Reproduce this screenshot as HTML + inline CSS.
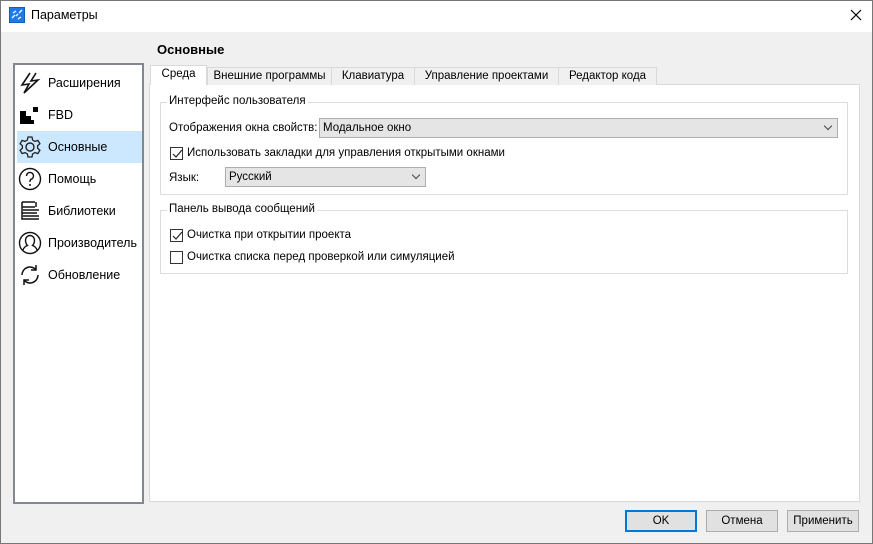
<!DOCTYPE html>
<html><head><meta charset="utf-8"><style>
*{box-sizing:border-box;margin:0;padding:0}
body{width:873px;height:544px;overflow:hidden;font-family:"Liberation Sans",sans-serif;font-size:12px;color:#000;background:#f0f0f0;position:relative}
.frame{position:absolute;left:0;top:0;width:873px;height:544px;border:1px solid #777;pointer-events:none}
.title{position:absolute;left:0;top:0;width:873px;height:32px;background:#fff}
.a{position:absolute}
.lp{left:13px;top:63px;width:131px;height:441px;background:#fff;border:2px solid #828790}
.item{position:absolute;left:2px;width:125px;height:32px;line-height:32px;padding-left:31px;font-size:12.5px}
.item svg{position:absolute;left:1px;top:4px}
.cp{left:149px;top:84px;width:711px;height:418px;background:#fff;border:1px solid #d9d9d9}
.tab{position:absolute;top:67px;height:18px;background:#f0f0f0;border:1px solid #d9d9d9;border-bottom:none;text-align:center;line-height:16px;font-size:11.5px}
.gb{position:absolute;border:1px solid #dcdcdc}
.gl{position:absolute;top:-8px;left:6px;background:#fff;padding:0 2px;font-size:11.5px}
.cb{position:absolute;width:13px;height:13px;border:1px solid #333;background:#fff}
.combo{position:absolute;height:20px;background:#e5e5e5;border:1px solid #adadad;line-height:18px;padding-left:3px;font-size:11.5px}
.combo:after{content:"";position:absolute;right:6px;top:4px;width:5px;height:5px;border-right:1px solid #444;border-bottom:1px solid #444;transform:rotate(45deg)}
.btn{position:absolute;top:510px;width:72px;height:22px;background:#e1e1e1;border:1px solid #adadad;text-align:center;line-height:20px;font-size:11.5px}
</style></head><body>
<div class="title">
<svg class="a" style="left:9px;top:7px" width="16" height="16"><rect x="0.5" y="0.5" width="15" height="15" fill="#1e7be6" stroke="#0d5fc0"/><path d="M3 11 L6 8 M7 9 L9 7 M10 6 L13 3 M4 6 L7 4 M9 12 L12 10" stroke="#fff" stroke-width="1.3"/></svg>
<div class="a" style="left:31px;top:8px;font-size:12.5px">Параметры</div>
<svg class="a" style="left:850px;top:9px" width="12" height="12"><path d="M1 1L11 11M11 1L1 11" stroke="#000" stroke-width="1.2"/></svg>
</div>
<div class="a" style="left:157px;top:42px;font-weight:bold;font-size:13px">Основные</div>
<div class="a lp">
<div class="item" style="top:2px"><svg width="24" height="24"><path d="M12 2 L4 14 L11 13 L6 22 L20 9 L13 10 L18 2" fill="none" stroke="#111" stroke-width="1.6"/></svg>Расширения</div>
<div class="item" style="top:34px"><svg width="24" height="24"><path d="M2 21 L2 8 L8 8 L8 13 L13 13 L13 17 L16 17 L16 21Z" fill="#000"/><rect x="15" y="4" width="5" height="5" fill="#000"/></svg>FBD</div>
<div class="item" style="top:66px;background:#cce8ff"><svg width="24" height="24"><circle cx="12" cy="12" r="4" fill="none" stroke="#222" stroke-width="1.4"/><path d="M10 2h4l.6 3 2.4 1.4 2.9-1 2 3.4-2.3 2 0 2.4 2.3 2-2 3.4-2.9-1-2.4 1.4-.6 3h-4l-.6-3-2.4-1.4-2.9 1-2-3.4 2.3-2 0-2.4-2.3-2 2-3.4 2.9 1 2.4-1.4z" fill="none" stroke="#222" stroke-width="1.3"/></svg>Основные</div>
<div class="item" style="top:98px"><svg width="24" height="24"><circle cx="12" cy="12" r="10.5" fill="none" stroke="#111" stroke-width="1.4"/><path d="M8.5 9a3.5 3.5 0 1 1 4.5 3.3c-1 .4-1 1.2-1 2.7" fill="none" stroke="#111" stroke-width="1.4"/><circle cx="12" cy="18" r="1" fill="#111"/></svg>Помощь</div>
<div class="item" style="top:130px"><svg width="24" height="24"><path d="M4 3h13M4 3v5h13M4 8v6h15M4 14v6h17M4 20h17M5 11h16M5 17h16M18 3v5" fill="none" stroke="#111" stroke-width="1.5"/></svg>Библиотеки</div>
<div class="item" style="top:162px"><svg width="24" height="24"><circle cx="12" cy="12" r="10.5" fill="none" stroke="#111" stroke-width="1.4"/><path d="M5 19c1-3 3-4 4.5-4.5C8 13 7.5 11 7.5 9a4.5 4.5 0 0 1 9 0c0 2-.5 4-2 5.5 1.5.5 3.5 1.5 4.5 4.5" fill="none" stroke="#111" stroke-width="1.4"/></svg>Производитель</div>
<div class="item" style="top:194px"><svg width="24" height="24"><path d="M4 12a8 8 0 0 1 14-5.3M20 12a8 8 0 0 1-14 5.3M18 2v5h-5M6 22v-5h5" fill="none" stroke="#111" stroke-width="1.5"/></svg>Обновление</div>
</div>
<div class="a cp"></div>
<div class="tab" style="left:150px;top:65px;width:57px;height:20px;background:#fff;border-color:#d9d9d9">Среда</div>
<div class="tab" style="left:207px;width:125px">Внешние программы</div>
<div class="tab" style="left:331px;width:84px">Клавиатура</div>
<div class="tab" style="left:414px;width:145px">Управление проектами</div>
<div class="tab" style="left:558px;width:99px">Редактор кода</div>
<div class="gb" style="left:160px;top:102px;width:688px;height:93px"><div class="gl">Интерфейс пользователя</div></div>
<div class="a" style="left:169px;top:122px;font-size:11.5px">Отображения окна свойств:</div>
<div class="combo" style="left:319px;top:118px;width:519px">Модальное окно</div>
<div class="cb" style="left:170px;top:147px"></div><svg class="a" style="left:171px;top:148px" width="12" height="12"><path d="M2 6l3 3 6-7" fill="none" stroke="#222" stroke-width="1.2"/></svg>
<div class="a" style="left:187px;top:147px;font-size:11.5px">Использовать закладки для управления открытыми окнами</div>
<div class="a" style="left:169px;top:172px;font-size:11.5px">Язык:</div>
<div class="combo" style="left:225px;top:167px;width:201px">Русский</div>
<div class="gb" style="left:160px;top:210px;width:688px;height:64px"><div class="gl">Панель вывода сообщений</div></div>
<div class="cb" style="left:170px;top:229px"></div><svg class="a" style="left:171px;top:230px" width="12" height="12"><path d="M2 6l3 3 6-7" fill="none" stroke="#222" stroke-width="1.2"/></svg>
<div class="a" style="left:187px;top:229px;font-size:11.5px">Очистка при открытии проекта</div>
<div class="cb" style="left:170px;top:251px"></div>
<div class="a" style="left:187px;top:251px;font-size:11.5px">Очистка списка перед проверкой или симуляцией</div>
<div class="btn" style="left:625px;border:2px solid #0078d7;line-height:18px">OK</div>
<div class="btn" style="left:706px">Отмена</div>
<div class="btn" style="left:787px">Применить</div>
<div class="frame"></div>
</body></html>
